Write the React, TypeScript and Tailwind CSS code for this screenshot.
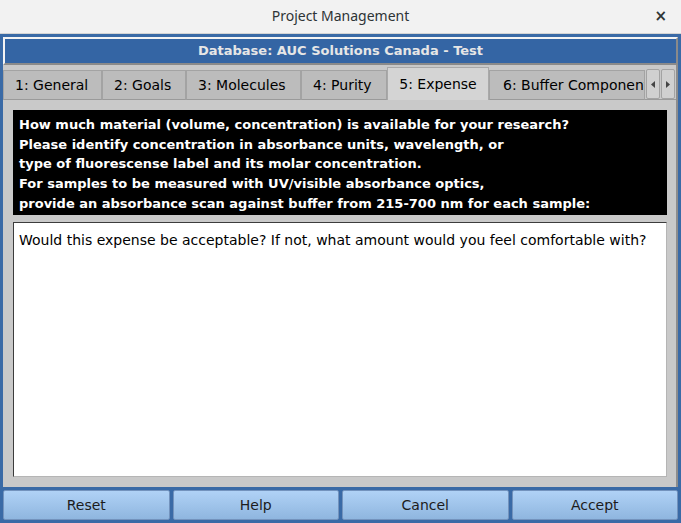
import React from "react";

const tabs = [
  { label: "1: General", w: "w-[99px]", pl: "pl-[11px]" },
  { label: "2: Goals", w: "w-[84px]", pl: "pl-[11px]" },
  { label: "3: Molecules", w: "w-[115px]", pl: "pl-[11px]" },
  { label: "4: Purity", w: "w-[86px]", pl: "pl-[11px]" },
  { label: "5: Expense", w: "w-[102px]", pl: "pl-[11px]", active: true },
  { label: "6: Buffer Components", w: "w-[156px]", pl: "pl-[13px]" },
];

const lines = [
  "How much material (volume, concentration) is available for your research?",
  "Please identify concentration in absorbance units, wavelength, or",
  "type of fluorescense label and its molar concentration.",
  "For samples to be measured with UV/visible absorbance optics,",
  "provide an absorbance scan against buffer from 215-700 nm for each sample:",
];

export default function App() {
  return (
    <div className="w-[681px] h-[523px] flex flex-col bg-[#3a6aa6] font-['DejaVu_Sans',sans-serif] overflow-hidden">
      {/* title bar */}
      <div className="h-[34px] shrink-0 flex items-center justify-center relative bg-[#f2f2f2] border-b border-[#d4d4d4]">
        <span className="font-['Noto_Sans',sans-serif] text-[14px] text-[#2e3436] -mt-[2px]">Project Management</span>
        <span className="absolute right-[14px] top-[5px] text-[15px] font-bold text-[#2e3436]">×</span>
      </div>

      <div className="flex-1 flex flex-col px-[3px] pt-[3px] pb-[3px]">
        {/* database banner */}
        <div className="h-[28px] shrink-0 flex items-center justify-center bg-[#3465a4] border-t-2 border-l-2 border-[#f4f4f4] border-b-2 border-r-2 border-b-[#8a8a8a] border-r-[#8a8a8a]">
          <span className="text-[13px] font-bold text-[#e6e6e6]">Database: AUC Solutions Canada - Test</span>
        </div>

        {/* tab widget */}
        <div className="flex-1 flex flex-col bg-[#c9c9c9] border-r-2 border-[#8d8d8d]">
          <div className="h-[35px] shrink-0 flex items-end pt-[2px] overflow-hidden">
            {tabs.map((t) =>
              t.active ? (
                <div
                  key={t.label}
                  className={`${t.w} h-[33px] shrink-0 flex items-center justify-center bg-[#d4d4d4] border-t border-l border-r border-[#a9a9a9] text-[14px] text-black`}
                >
                  {t.label}
                </div>
              ) : (
                <div
                  key={t.label}
                  className={`${t.w} ${t.pl} h-[30px] shrink-0 flex items-center justify-start overflow-hidden whitespace-nowrap bg-[#bcbcbc] border-t border-l border-r border-[#a3a3a3] border-b border-b-[#9a9a9a] text-[14px] text-black`}
                >
                  {t.label}
                </div>
              )
            )}
            {/* scroll arrows */}
            <div className="flex-1 h-[31px] flex gap-[1px] pl-[1px] border-b border-[#9a9a9a]">
              <div className="w-[14px] h-[30px] flex items-center justify-center bg-[#d0d0d0] border border-[#a3a3a3] rounded-[2px]">
                <svg width="4" height="7" viewBox="0 0 4 7">
                  <path d="M4 0 L0 3.5 L4 7 Z" fill="#444" />
                </svg>
              </div>
              <div className="w-[14px] h-[30px] flex items-center justify-center bg-[#d0d0d0] border border-[#a3a3a3] rounded-[2px]">
                <svg width="4" height="7" viewBox="0 0 4 7">
                  <path d="M0 0 L4 3.5 L0 7 Z" fill="#444" />
                </svg>
              </div>
            </div>
          </div>

          {/* pane */}
          <div className="flex-1 flex flex-col pl-[10px] pr-[9px] pt-[10px] pb-[10px] gap-[7px]">
            <div className="h-[105px] shrink-0 bg-black pl-[6px] pt-[5px]">
              {lines.map((l) => (
                <div key={l} className="text-[13px] leading-[19.7px] font-bold text-white whitespace-nowrap">
                  {l}
                </div>
              ))}
            </div>
            <div className="flex-1 bg-white border-t border-l border-[#3c3c3c] border-b border-r border-b-[#b5b5b5] border-r-[#b5b5b5] pl-[5px] pt-[8px]">
              <div className="text-[14px] leading-[18px] text-black">
                Would this expense be acceptable? If not, what amount would you feel comfortable with?
              </div>
            </div>
          </div>
        </div>

        {/* buttons */}
        <div className="h-[30px] shrink-0 mt-[3px] flex gap-[3px]">
          {["Reset", "Help", "Cancel", "Accept"].map((b) => (
            <button
              key={b}
              className="flex-1 h-full flex items-center justify-center rounded-[2px] border border-[#7393bd] bg-gradient-to-b from-[#b0d2f6] to-[#8fb6df] text-[14px] text-[#1c1c1c]"
            >
              {b}
            </button>
          ))}
        </div>
      </div>
    </div>
  );
}
